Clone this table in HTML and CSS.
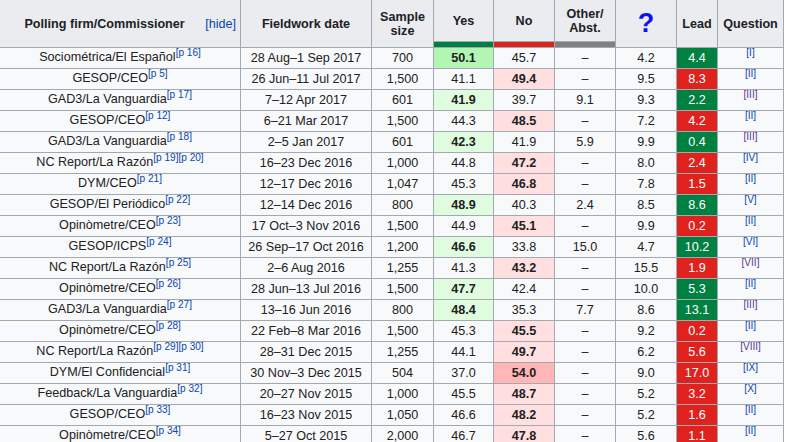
FILE: index.html
```html
<!DOCTYPE html>
<html>
<head>
<meta charset="utf-8">
<link rel="stylesheet" href="styles.css">
</head>
<body>
<table class="polls">
<colgroup>
<col class="c-firm"><col class="c-date"><col class="c-size"><col class="c-yes"><col class="c-no"><col class="c-oth"><col class="c-q"><col class="c-lead"><col class="c-ques">
</colgroup>
<thead>
<tr class="hrow1">
<th rowspan="2" class="firm-h"><a class="hide">[hide]</a>Polling firm/Commissioner</th>
<th rowspan="2">Fieldwork date</th>
<th rowspan="2">Sample<br>size</th>
<th>Yes</th>
<th>No</th>
<th>Other/<br>Abst.</th>
<th rowspan="2"><span class="qmark">?</span></th>
<th rowspan="2">Lead</th>
<th rowspan="2">Question</th>
</tr>
<tr class="hrow2">
<th class="bar bar-yes"></th>
<th class="bar bar-no"></th>
<th class="bar bar-oth"></th>
</tr>
</thead>
<tbody>
<tr><td>Sociométrica/El Español<sup class="ref">[p 16]</sup></td><td>28 Aug–1 Sep 2017</td><td>700</td><td class="yes2 b">50.1</td><td>45.7</td><td>–</td><td>4.2</td><td class="lg">4.4</td><td><sup class="ref">[I]</sup></td></tr>
<tr><td>GESOP/CEO<sup class="ref">[p 5]</sup></td><td>26 Jun–11 Jul 2017</td><td>1,500</td><td>41.1</td><td class="no1 b">49.4</td><td>–</td><td>9.5</td><td class="lr">8.3</td><td><sup class="ref">[II]</sup></td></tr>
<tr><td>GAD3/La Vanguardia<sup class="ref">[p 17]</sup></td><td>7–12 Apr 2017</td><td>601</td><td class="yes1 b">41.9</td><td>39.7</td><td>9.1</td><td>9.3</td><td class="lg">2.2</td><td><sup class="ref v">[III]</sup></td></tr>
<tr><td>GESOP/CEO<sup class="ref">[p 12]</sup></td><td>6–21 Mar 2017</td><td>1,500</td><td>44.3</td><td class="no1 b">48.5</td><td>–</td><td>7.2</td><td class="lr">4.2</td><td><sup class="ref">[II]</sup></td></tr>
<tr><td>GAD3/La Vanguardia<sup class="ref">[p 18]</sup></td><td>2–5 Jan 2017</td><td>601</td><td class="yes1 b">42.3</td><td>41.9</td><td>5.9</td><td>9.9</td><td class="lg">0.4</td><td><sup class="ref v">[III]</sup></td></tr>
<tr><td>NC Report/La Razón<sup class="ref">[p 19]</sup><sup class="ref">[p 20]</sup></td><td>16–23 Dec 2016</td><td>1,000</td><td>44.8</td><td class="no1 b">47.2</td><td>–</td><td>8.0</td><td class="lr">2.4</td><td><sup class="ref">[IV]</sup></td></tr>
<tr><td>DYM/CEO<sup class="ref">[p 21]</sup></td><td>12–17 Dec 2016</td><td>1,047</td><td>45.3</td><td class="no1 b">46.8</td><td>–</td><td>7.8</td><td class="lr">1.5</td><td><sup class="ref">[II]</sup></td></tr>
<tr><td>GESOP/El Periódico<sup class="ref">[p 22]</sup></td><td>12–14 Dec 2016</td><td>800</td><td class="yes1 b">48.9</td><td>40.3</td><td>2.4</td><td>8.5</td><td class="lg">8.6</td><td><sup class="ref">[V]</sup></td></tr>
<tr><td>Opinòmetre/CEO<sup class="ref">[p 23]</sup></td><td>17 Oct–3 Nov 2016</td><td>1,500</td><td>44.9</td><td class="no1 b">45.1</td><td>–</td><td>9.9</td><td class="lr">0.2</td><td><sup class="ref">[II]</sup></td></tr>
<tr><td>GESOP/ICPS<sup class="ref">[p 24]</sup></td><td>26 Sep–17 Oct 2016</td><td>1,200</td><td class="yes1 b">46.6</td><td>33.8</td><td>15.0</td><td>4.7</td><td class="lg">10.2</td><td><sup class="ref">[VI]</sup></td></tr>
<tr><td>NC Report/La Razón<sup class="ref">[p 25]</sup></td><td>2–6 Aug 2016</td><td>1,255</td><td>41.3</td><td class="no1 b">43.2</td><td>–</td><td>15.5</td><td class="lr">1.9</td><td><sup class="ref v">[VII]</sup></td></tr>
<tr><td>Opinòmetre/CEO<sup class="ref">[p 26]</sup></td><td>28 Jun–13 Jul 2016</td><td>1,500</td><td class="yes1 b">47.7</td><td>42.4</td><td>–</td><td>10.0</td><td class="lg">5.3</td><td><sup class="ref">[II]</sup></td></tr>
<tr><td>GAD3/La Vanguardia<sup class="ref">[p 27]</sup></td><td>13–16 Jun 2016</td><td>800</td><td class="yes1 b">48.4</td><td>35.3</td><td>7.7</td><td>8.6</td><td class="lg">13.1</td><td><sup class="ref v">[III]</sup></td></tr>
<tr><td>Opinòmetre/CEO<sup class="ref">[p 28]</sup></td><td>22 Feb–8 Mar 2016</td><td>1,500</td><td>45.3</td><td class="no1 b">45.5</td><td>–</td><td>9.2</td><td class="lr">0.2</td><td><sup class="ref">[II]</sup></td></tr>
<tr><td>NC Report/La Razón<sup class="ref">[p 29]</sup><sup class="ref">[p 30]</sup></td><td>28–31 Dec 2015</td><td>1,255</td><td>44.1</td><td class="no1 b">49.7</td><td>–</td><td>6.2</td><td class="lr">5.6</td><td><sup class="ref v">[VIII]</sup></td></tr>
<tr><td>DYM/El Confidencial<sup class="ref">[p 31]</sup></td><td>30 Nov–3 Dec 2015</td><td>504</td><td>37.0</td><td class="no2 b">54.0</td><td>–</td><td>9.0</td><td class="lr">17.0</td><td><sup class="ref">[IX]</sup></td></tr>
<tr><td>Feedback/La Vanguardia<sup class="ref">[p 32]</sup></td><td>20–27 Nov 2015</td><td>1,000</td><td>45.5</td><td class="no1 b">48.7</td><td>–</td><td>5.2</td><td class="lr">3.2</td><td><sup class="ref">[X]</sup></td></tr>
<tr><td>GESOP/CEO<sup class="ref">[p 33]</sup></td><td>16–23 Nov 2015</td><td>1,050</td><td>46.6</td><td class="no1 b">48.2</td><td>–</td><td>5.2</td><td class="lr">1.6</td><td><sup class="ref">[II]</sup></td></tr>
<tr><td>Opinòmetre/CEO<sup class="ref">[p 34]</sup></td><td>5–27 Oct 2015</td><td>2,000</td><td>46.7</td><td class="no1 b">47.8</td><td>–</td><td>5.6</td><td class="lr">1.1</td><td><sup class="ref">[II]</sup></td></tr>
</tbody>
</table>
</body>
</html>
```
FILE: styles.css
```css
html, body {
  margin: 0;
  padding: 0;
  background: #ffffff;
  overflow: hidden;
}

.polls {
  border-collapse: collapse;
  table-layout: fixed;
  width: 784px;
  margin: -1px 0 0 -1px;
  font-family: "Liberation Sans", Arial, sans-serif;
  font-size: 12.6px;
  color: #202122;
  background: #f8f9fa;
}

.c-firm { width: 241px; }
.c-date { width: 131px; }
.c-size { width: 62px; }
.c-yes { width: 60px; }
.c-no { width: 61px; }
.c-oth { width: 61px; }
.c-q { width: 61px; }
.c-lead { width: 41px; }
.c-ques { width: 66px; }

.polls th,
.polls td {
  border: 1px solid #a2a9b1;
  padding: 0 4px;
  text-align: center;
  white-space: nowrap;
}

.polls th {
  background: #eaecf0;
  font-weight: bold;
  line-height: 14px;
}

.hrow1 { height: 42px; }
.hrow2 { height: 6px; }

.polls th.bar {
  padding: 0;
  font-size: 0;
  line-height: 0;
}
.bar-yes { background: #008142 !important; }
.bar-no { background: #dc241f !important; }
.bar-oth { background: #808080 !important; }

.hide {
  float: right;
  font-weight: normal;
  color: #0645ad;
}

.qmark {
  font-size: 27px;
  line-height: 20px;
  color: #1010f0;
  font-weight: bold;
}

.polls tbody tr { height: 21px; }
.polls tbody td { line-height: 19px; }

.b { font-weight: bold; }
.yes1 { background: #dffcdf; }
.yes2 { background: #b3f5b3; }
.no1 { background: #ffdfdf; }
.no2 { background: #ffb6b6; }
.lg { background: #008142; color: #ffffff; }
.lr { background: #e0221f; color: #ffffff; }

.ref {
  font-size: 80%;
  line-height: 1;
  vertical-align: super;
  color: #0645ad;
}
.ref.v { color: #5a3696; }
```
